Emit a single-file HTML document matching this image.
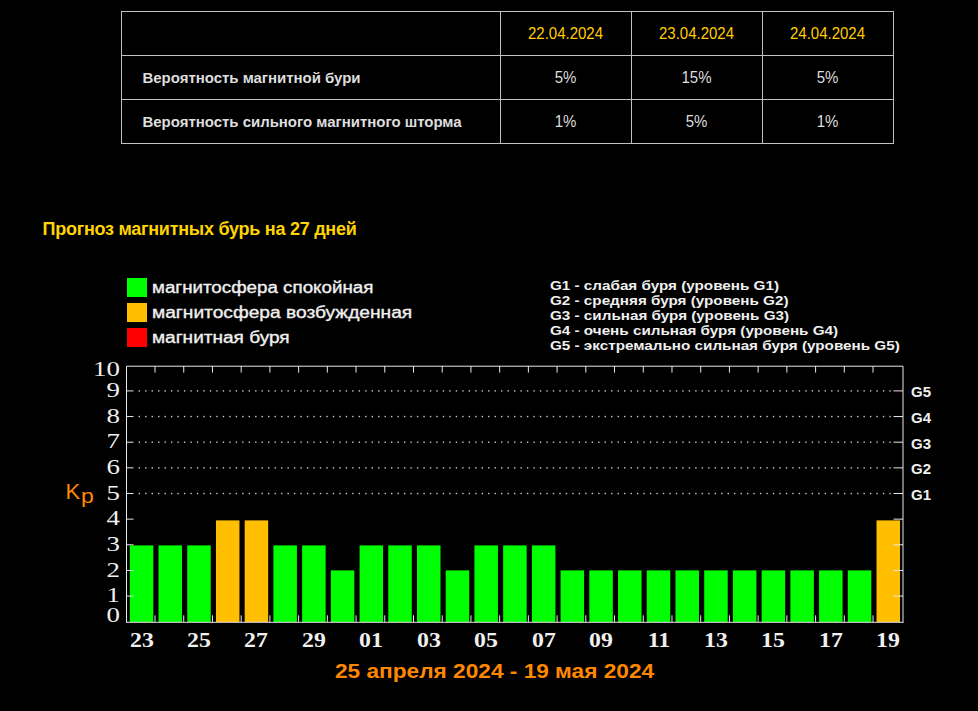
<!DOCTYPE html>
<html><head><meta charset="utf-8">
<style>
html,body{margin:0;padding:0;background:#000;width:978px;height:711px;overflow:hidden;position:relative}
body{font-family:"Liberation Sans",sans-serif}
.a{position:absolute;white-space:nowrap}
.hl{position:absolute;background:#c0c0c0;height:1px}
.vl{position:absolute;background:#c0c0c0;width:1px}
.t{position:absolute;white-space:nowrap;font:bold 15px/17px "Liberation Sans",sans-serif;color:#dedede;letter-spacing:-0.03px}
.c{position:absolute;white-space:nowrap;font:15px/17px "Liberation Sans",sans-serif;color:#dedede;width:131px;text-align:center;transform-origin:0 13.7px;transform:scaleY(1.045)}
.d{color:#ffcc00}
.ttl{position:absolute;left:42.5px;top:219.5px;font:bold 18px/19px "Liberation Sans",sans-serif;color:#ffd400;letter-spacing:-0.26px;white-space:nowrap}
.sq{position:absolute;left:127px;width:20px;height:18.5px}
.lg{position:absolute;left:152px;margin-top:1.2px;font:16px/17px "Liberation Sans",sans-serif;color:#f0f0f0;white-space:nowrap;transform-origin:0 0;transform:scaleX(1.18);-webkit-text-stroke:0.35px #f0f0f0}
.gg{position:absolute;left:550px;font:bold 13px/15px "Liberation Sans",sans-serif;color:#f0f0f0;white-space:nowrap;transform-origin:0 0;transform:scaleX(1.172)}
.yl{position:absolute;left:70.3px;width:50px;text-align:right;font:21px/21px "Liberation Serif",serif;color:#f0f0f0;transform-origin:100% 0;transform:scaleX(1.28)}
.gl{position:absolute;left:911px;font:bold 15px/16px "Liberation Sans",sans-serif;color:#f0f0f0;transform-origin:0 0;transform:scaleX(1.0)}
.xl{position:absolute;top:630px;width:40px;text-align:center;font:bold 20px/20px "Liberation Serif",serif;color:#f0f0f0;transform:scaleX(1.19)}
.kp{position:absolute;left:65.5px;top:481px;font:22px/22px "Liberation Sans",sans-serif;color:#ff8800}
.rng{position:absolute;left:335px;top:660px;font:bold 20.5px/22px "Liberation Sans",sans-serif;color:#ff8800;white-space:nowrap;transform-origin:0 0;transform:scaleX(1.105)}
</style></head><body>
<!-- table -->
<div class="hl" style="left:121px;top:11px;width:773px"></div>
<div class="hl" style="left:121px;top:55px;width:773px"></div>
<div class="hl" style="left:121px;top:99px;width:773px"></div>
<div class="hl" style="left:121px;top:143px;width:773px"></div>
<div class="vl" style="left:121px;top:11px;height:133px"></div>
<div class="vl" style="left:500px;top:11px;height:133px"></div>
<div class="vl" style="left:631px;top:11px;height:133px"></div>
<div class="vl" style="left:762px;top:11px;height:133px"></div>
<div class="vl" style="left:893px;top:11px;height:133px"></div>
<div class="c d" style="left:500px;top:25px">22.04.2024</div>
<div class="c d" style="left:631px;top:25px">23.04.2024</div>
<div class="c d" style="left:762px;top:25px">24.04.2024</div>
<div class="t" style="left:142.5px;top:69px">Вероятность магнитной бури</div>
<div class="c" style="left:500px;top:69px">5%</div>
<div class="c" style="left:631px;top:69px">15%</div>
<div class="c" style="left:762px;top:69px">5%</div>
<div class="t" style="left:142.5px;top:113px">Вероятность сильного магнитного шторма</div>
<div class="c" style="left:500px;top:113px">1%</div>
<div class="c" style="left:631px;top:113px">5%</div>
<div class="c" style="left:762px;top:113px">1%</div>

<div class="ttl">Прогноз магнитных бурь на 27 дней</div>

<div class="sq" style="top:278px;background:#00ff00"></div>
<div class="sq" style="top:303px;background:#ffbf00"></div>
<div class="sq" style="top:328px;background:#ff0000"></div>
<div class="lg" style="top:278px;transform:scaleX(1.172)">магнитосфера спокойная</div>
<div class="lg" style="top:303px;transform:scaleX(1.198)">магнитосфера возбужденная</div>
<div class="lg" style="top:328px;transform:scaleX(1.19)">магнитная буря</div>

<div class="gg" style="top:278px">G1 - слабая буря (уровень G1)</div>
<div class="gg" style="top:293px">G2 - средняя буря (уровень G2)</div>
<div class="gg" style="top:308px">G3 - сильная буря (уровень G3)</div>
<div class="gg" style="top:323px">G4 - очень сильная буря (уровень G4)</div>
<div class="gg" style="top:338px">G5 - экстремально сильная буря (уровень G5)</div>

<svg style="position:absolute;left:0;top:0" width="978" height="711" viewBox="0 0 978 711">
<rect x="129.80" y="545.40" width="23.5" height="76.60" fill="#00ff00"/>
<rect x="158.52" y="545.40" width="23.5" height="76.60" fill="#00ff00"/>
<rect x="187.24" y="545.40" width="23.5" height="76.60" fill="#00ff00"/>
<rect x="215.96" y="520.40" width="23.5" height="101.60" fill="#ffbf00"/>
<rect x="244.68" y="520.40" width="23.5" height="101.60" fill="#ffbf00"/>
<rect x="273.40" y="545.40" width="23.5" height="76.60" fill="#00ff00"/>
<rect x="302.12" y="545.40" width="23.5" height="76.60" fill="#00ff00"/>
<rect x="330.84" y="570.40" width="23.5" height="51.60" fill="#00ff00"/>
<rect x="359.56" y="545.40" width="23.5" height="76.60" fill="#00ff00"/>
<rect x="388.28" y="545.40" width="23.5" height="76.60" fill="#00ff00"/>
<rect x="417.00" y="545.40" width="23.5" height="76.60" fill="#00ff00"/>
<rect x="445.72" y="570.40" width="23.5" height="51.60" fill="#00ff00"/>
<rect x="474.44" y="545.40" width="23.5" height="76.60" fill="#00ff00"/>
<rect x="503.16" y="545.40" width="23.5" height="76.60" fill="#00ff00"/>
<rect x="531.88" y="545.40" width="23.5" height="76.60" fill="#00ff00"/>
<rect x="560.60" y="570.40" width="23.5" height="51.60" fill="#00ff00"/>
<rect x="589.32" y="570.40" width="23.5" height="51.60" fill="#00ff00"/>
<rect x="618.04" y="570.40" width="23.5" height="51.60" fill="#00ff00"/>
<rect x="646.76" y="570.40" width="23.5" height="51.60" fill="#00ff00"/>
<rect x="675.48" y="570.40" width="23.5" height="51.60" fill="#00ff00"/>
<rect x="704.20" y="570.40" width="23.5" height="51.60" fill="#00ff00"/>
<rect x="732.92" y="570.40" width="23.5" height="51.60" fill="#00ff00"/>
<rect x="761.64" y="570.40" width="23.5" height="51.60" fill="#00ff00"/>
<rect x="790.36" y="570.40" width="23.5" height="51.60" fill="#00ff00"/>
<rect x="819.08" y="570.40" width="23.5" height="51.60" fill="#00ff00"/>
<rect x="847.80" y="570.40" width="23.5" height="51.60" fill="#00ff00"/>
<rect x="876.52" y="520.40" width="23.5" height="101.60" fill="#ffbf00"/>
<path d="M126.5 622.5V366.2H903V622.5" fill="none" stroke="#e8e8e8" stroke-width="1"/>
<path d="M126 622.3H903.5" stroke="#e8e8e8" stroke-width="1"/>
<path d="M155.02 366V372.6M155.02 615.3V622M183.74 366V372.6M183.74 615.3V622M212.46 366V372.6M212.46 615.3V622M241.18 366V372.6M241.18 615.3V622M269.90 366V372.6M269.90 615.3V622M298.62 366V372.6M298.62 615.3V622M327.34 366V372.6M327.34 615.3V622M356.06 366V372.6M356.06 615.3V622M384.78 366V372.6M384.78 615.3V622M413.50 366V372.6M413.50 615.3V622M442.22 366V372.6M442.22 615.3V622M470.94 366V372.6M470.94 615.3V622M499.66 366V372.6M499.66 615.3V622M528.38 366V372.6M528.38 615.3V622M557.10 366V372.6M557.10 615.3V622M585.82 366V372.6M585.82 615.3V622M614.54 366V372.6M614.54 615.3V622M643.26 366V372.6M643.26 615.3V622M671.98 366V372.6M671.98 615.3V622M700.70 366V372.6M700.70 615.3V622M729.42 366V372.6M729.42 615.3V622M758.14 366V372.6M758.14 615.3V622M786.86 366V372.6M786.86 615.3V622M815.58 366V372.6M815.58 615.3V622M844.30 366V372.6M844.30 615.3V622M873.02 366V372.6M873.02 615.3V622" stroke="#e8e8e8" stroke-width="1"/>
<path d="M126 596.10H133.5M893.5 596.10H903M126 570.45H133.5M893.5 570.45H903M126 544.80H133.5M893.5 544.80H903M126 519.15H133.5M893.5 519.15H903M126 493.50H133.5M893.5 493.50H903M126 467.85H133.5M893.5 467.85H903M126 442.20H133.5M893.5 442.20H903M126 416.55H133.5M893.5 416.55H903M126 390.90H133.5M893.5 390.90H903" stroke="#e8e8e8" stroke-width="1"/>
<g fill="#c8c8c8"><rect x="138.60" y="492.80" width="1.4" height="1.4"/><rect x="145.07" y="492.80" width="1.4" height="1.4"/><rect x="151.54" y="492.80" width="1.4" height="1.4"/><rect x="158.02" y="492.80" width="1.4" height="1.4"/><rect x="164.49" y="492.80" width="1.4" height="1.4"/><rect x="170.96" y="492.80" width="1.4" height="1.4"/><rect x="177.43" y="492.80" width="1.4" height="1.4"/><rect x="183.90" y="492.80" width="1.4" height="1.4"/><rect x="190.38" y="492.80" width="1.4" height="1.4"/><rect x="196.85" y="492.80" width="1.4" height="1.4"/><rect x="203.32" y="492.80" width="1.4" height="1.4"/><rect x="209.79" y="492.80" width="1.4" height="1.4"/><rect x="216.26" y="492.80" width="1.4" height="1.4"/><rect x="222.74" y="492.80" width="1.4" height="1.4"/><rect x="229.21" y="492.80" width="1.4" height="1.4"/><rect x="235.68" y="492.80" width="1.4" height="1.4"/><rect x="242.15" y="492.80" width="1.4" height="1.4"/><rect x="248.62" y="492.80" width="1.4" height="1.4"/><rect x="255.10" y="492.80" width="1.4" height="1.4"/><rect x="261.57" y="492.80" width="1.4" height="1.4"/><rect x="268.04" y="492.80" width="1.4" height="1.4"/><rect x="274.51" y="492.80" width="1.4" height="1.4"/><rect x="280.98" y="492.80" width="1.4" height="1.4"/><rect x="287.46" y="492.80" width="1.4" height="1.4"/><rect x="293.93" y="492.80" width="1.4" height="1.4"/><rect x="300.40" y="492.80" width="1.4" height="1.4"/><rect x="306.87" y="492.80" width="1.4" height="1.4"/><rect x="313.34" y="492.80" width="1.4" height="1.4"/><rect x="319.82" y="492.80" width="1.4" height="1.4"/><rect x="326.29" y="492.80" width="1.4" height="1.4"/><rect x="332.76" y="492.80" width="1.4" height="1.4"/><rect x="339.23" y="492.80" width="1.4" height="1.4"/><rect x="345.70" y="492.80" width="1.4" height="1.4"/><rect x="352.18" y="492.80" width="1.4" height="1.4"/><rect x="358.65" y="492.80" width="1.4" height="1.4"/><rect x="365.12" y="492.80" width="1.4" height="1.4"/><rect x="371.59" y="492.80" width="1.4" height="1.4"/><rect x="378.06" y="492.80" width="1.4" height="1.4"/><rect x="384.54" y="492.80" width="1.4" height="1.4"/><rect x="391.01" y="492.80" width="1.4" height="1.4"/><rect x="397.48" y="492.80" width="1.4" height="1.4"/><rect x="403.95" y="492.80" width="1.4" height="1.4"/><rect x="410.42" y="492.80" width="1.4" height="1.4"/><rect x="416.90" y="492.80" width="1.4" height="1.4"/><rect x="423.37" y="492.80" width="1.4" height="1.4"/><rect x="429.84" y="492.80" width="1.4" height="1.4"/><rect x="436.31" y="492.80" width="1.4" height="1.4"/><rect x="442.78" y="492.80" width="1.4" height="1.4"/><rect x="449.26" y="492.80" width="1.4" height="1.4"/><rect x="455.73" y="492.80" width="1.4" height="1.4"/><rect x="462.20" y="492.80" width="1.4" height="1.4"/><rect x="468.67" y="492.80" width="1.4" height="1.4"/><rect x="475.14" y="492.80" width="1.4" height="1.4"/><rect x="481.62" y="492.80" width="1.4" height="1.4"/><rect x="488.09" y="492.80" width="1.4" height="1.4"/><rect x="494.56" y="492.80" width="1.4" height="1.4"/><rect x="501.03" y="492.80" width="1.4" height="1.4"/><rect x="507.50" y="492.80" width="1.4" height="1.4"/><rect x="513.98" y="492.80" width="1.4" height="1.4"/><rect x="520.45" y="492.80" width="1.4" height="1.4"/><rect x="526.92" y="492.80" width="1.4" height="1.4"/><rect x="533.39" y="492.80" width="1.4" height="1.4"/><rect x="539.86" y="492.80" width="1.4" height="1.4"/><rect x="546.34" y="492.80" width="1.4" height="1.4"/><rect x="552.81" y="492.80" width="1.4" height="1.4"/><rect x="559.28" y="492.80" width="1.4" height="1.4"/><rect x="565.75" y="492.80" width="1.4" height="1.4"/><rect x="572.22" y="492.80" width="1.4" height="1.4"/><rect x="578.70" y="492.80" width="1.4" height="1.4"/><rect x="585.17" y="492.80" width="1.4" height="1.4"/><rect x="591.64" y="492.80" width="1.4" height="1.4"/><rect x="598.11" y="492.80" width="1.4" height="1.4"/><rect x="604.58" y="492.80" width="1.4" height="1.4"/><rect x="611.06" y="492.80" width="1.4" height="1.4"/><rect x="617.53" y="492.80" width="1.4" height="1.4"/><rect x="624.00" y="492.80" width="1.4" height="1.4"/><rect x="630.47" y="492.80" width="1.4" height="1.4"/><rect x="636.94" y="492.80" width="1.4" height="1.4"/><rect x="643.42" y="492.80" width="1.4" height="1.4"/><rect x="649.89" y="492.80" width="1.4" height="1.4"/><rect x="656.36" y="492.80" width="1.4" height="1.4"/><rect x="662.83" y="492.80" width="1.4" height="1.4"/><rect x="669.30" y="492.80" width="1.4" height="1.4"/><rect x="675.78" y="492.80" width="1.4" height="1.4"/><rect x="682.25" y="492.80" width="1.4" height="1.4"/><rect x="688.72" y="492.80" width="1.4" height="1.4"/><rect x="695.19" y="492.80" width="1.4" height="1.4"/><rect x="701.66" y="492.80" width="1.4" height="1.4"/><rect x="708.14" y="492.80" width="1.4" height="1.4"/><rect x="714.61" y="492.80" width="1.4" height="1.4"/><rect x="721.08" y="492.80" width="1.4" height="1.4"/><rect x="727.55" y="492.80" width="1.4" height="1.4"/><rect x="734.02" y="492.80" width="1.4" height="1.4"/><rect x="740.50" y="492.80" width="1.4" height="1.4"/><rect x="746.97" y="492.80" width="1.4" height="1.4"/><rect x="753.44" y="492.80" width="1.4" height="1.4"/><rect x="759.91" y="492.80" width="1.4" height="1.4"/><rect x="766.38" y="492.80" width="1.4" height="1.4"/><rect x="772.86" y="492.80" width="1.4" height="1.4"/><rect x="779.33" y="492.80" width="1.4" height="1.4"/><rect x="785.80" y="492.80" width="1.4" height="1.4"/><rect x="792.27" y="492.80" width="1.4" height="1.4"/><rect x="798.74" y="492.80" width="1.4" height="1.4"/><rect x="805.22" y="492.80" width="1.4" height="1.4"/><rect x="811.69" y="492.80" width="1.4" height="1.4"/><rect x="818.16" y="492.80" width="1.4" height="1.4"/><rect x="824.63" y="492.80" width="1.4" height="1.4"/><rect x="831.10" y="492.80" width="1.4" height="1.4"/><rect x="837.58" y="492.80" width="1.4" height="1.4"/><rect x="844.05" y="492.80" width="1.4" height="1.4"/><rect x="850.52" y="492.80" width="1.4" height="1.4"/><rect x="856.99" y="492.80" width="1.4" height="1.4"/><rect x="863.46" y="492.80" width="1.4" height="1.4"/><rect x="869.94" y="492.80" width="1.4" height="1.4"/><rect x="876.41" y="492.80" width="1.4" height="1.4"/><rect x="882.88" y="492.80" width="1.4" height="1.4"/><rect x="889.35" y="492.80" width="1.4" height="1.4"/><rect x="138.60" y="467.15" width="1.4" height="1.4"/><rect x="145.07" y="467.15" width="1.4" height="1.4"/><rect x="151.54" y="467.15" width="1.4" height="1.4"/><rect x="158.02" y="467.15" width="1.4" height="1.4"/><rect x="164.49" y="467.15" width="1.4" height="1.4"/><rect x="170.96" y="467.15" width="1.4" height="1.4"/><rect x="177.43" y="467.15" width="1.4" height="1.4"/><rect x="183.90" y="467.15" width="1.4" height="1.4"/><rect x="190.38" y="467.15" width="1.4" height="1.4"/><rect x="196.85" y="467.15" width="1.4" height="1.4"/><rect x="203.32" y="467.15" width="1.4" height="1.4"/><rect x="209.79" y="467.15" width="1.4" height="1.4"/><rect x="216.26" y="467.15" width="1.4" height="1.4"/><rect x="222.74" y="467.15" width="1.4" height="1.4"/><rect x="229.21" y="467.15" width="1.4" height="1.4"/><rect x="235.68" y="467.15" width="1.4" height="1.4"/><rect x="242.15" y="467.15" width="1.4" height="1.4"/><rect x="248.62" y="467.15" width="1.4" height="1.4"/><rect x="255.10" y="467.15" width="1.4" height="1.4"/><rect x="261.57" y="467.15" width="1.4" height="1.4"/><rect x="268.04" y="467.15" width="1.4" height="1.4"/><rect x="274.51" y="467.15" width="1.4" height="1.4"/><rect x="280.98" y="467.15" width="1.4" height="1.4"/><rect x="287.46" y="467.15" width="1.4" height="1.4"/><rect x="293.93" y="467.15" width="1.4" height="1.4"/><rect x="300.40" y="467.15" width="1.4" height="1.4"/><rect x="306.87" y="467.15" width="1.4" height="1.4"/><rect x="313.34" y="467.15" width="1.4" height="1.4"/><rect x="319.82" y="467.15" width="1.4" height="1.4"/><rect x="326.29" y="467.15" width="1.4" height="1.4"/><rect x="332.76" y="467.15" width="1.4" height="1.4"/><rect x="339.23" y="467.15" width="1.4" height="1.4"/><rect x="345.70" y="467.15" width="1.4" height="1.4"/><rect x="352.18" y="467.15" width="1.4" height="1.4"/><rect x="358.65" y="467.15" width="1.4" height="1.4"/><rect x="365.12" y="467.15" width="1.4" height="1.4"/><rect x="371.59" y="467.15" width="1.4" height="1.4"/><rect x="378.06" y="467.15" width="1.4" height="1.4"/><rect x="384.54" y="467.15" width="1.4" height="1.4"/><rect x="391.01" y="467.15" width="1.4" height="1.4"/><rect x="397.48" y="467.15" width="1.4" height="1.4"/><rect x="403.95" y="467.15" width="1.4" height="1.4"/><rect x="410.42" y="467.15" width="1.4" height="1.4"/><rect x="416.90" y="467.15" width="1.4" height="1.4"/><rect x="423.37" y="467.15" width="1.4" height="1.4"/><rect x="429.84" y="467.15" width="1.4" height="1.4"/><rect x="436.31" y="467.15" width="1.4" height="1.4"/><rect x="442.78" y="467.15" width="1.4" height="1.4"/><rect x="449.26" y="467.15" width="1.4" height="1.4"/><rect x="455.73" y="467.15" width="1.4" height="1.4"/><rect x="462.20" y="467.15" width="1.4" height="1.4"/><rect x="468.67" y="467.15" width="1.4" height="1.4"/><rect x="475.14" y="467.15" width="1.4" height="1.4"/><rect x="481.62" y="467.15" width="1.4" height="1.4"/><rect x="488.09" y="467.15" width="1.4" height="1.4"/><rect x="494.56" y="467.15" width="1.4" height="1.4"/><rect x="501.03" y="467.15" width="1.4" height="1.4"/><rect x="507.50" y="467.15" width="1.4" height="1.4"/><rect x="513.98" y="467.15" width="1.4" height="1.4"/><rect x="520.45" y="467.15" width="1.4" height="1.4"/><rect x="526.92" y="467.15" width="1.4" height="1.4"/><rect x="533.39" y="467.15" width="1.4" height="1.4"/><rect x="539.86" y="467.15" width="1.4" height="1.4"/><rect x="546.34" y="467.15" width="1.4" height="1.4"/><rect x="552.81" y="467.15" width="1.4" height="1.4"/><rect x="559.28" y="467.15" width="1.4" height="1.4"/><rect x="565.75" y="467.15" width="1.4" height="1.4"/><rect x="572.22" y="467.15" width="1.4" height="1.4"/><rect x="578.70" y="467.15" width="1.4" height="1.4"/><rect x="585.17" y="467.15" width="1.4" height="1.4"/><rect x="591.64" y="467.15" width="1.4" height="1.4"/><rect x="598.11" y="467.15" width="1.4" height="1.4"/><rect x="604.58" y="467.15" width="1.4" height="1.4"/><rect x="611.06" y="467.15" width="1.4" height="1.4"/><rect x="617.53" y="467.15" width="1.4" height="1.4"/><rect x="624.00" y="467.15" width="1.4" height="1.4"/><rect x="630.47" y="467.15" width="1.4" height="1.4"/><rect x="636.94" y="467.15" width="1.4" height="1.4"/><rect x="643.42" y="467.15" width="1.4" height="1.4"/><rect x="649.89" y="467.15" width="1.4" height="1.4"/><rect x="656.36" y="467.15" width="1.4" height="1.4"/><rect x="662.83" y="467.15" width="1.4" height="1.4"/><rect x="669.30" y="467.15" width="1.4" height="1.4"/><rect x="675.78" y="467.15" width="1.4" height="1.4"/><rect x="682.25" y="467.15" width="1.4" height="1.4"/><rect x="688.72" y="467.15" width="1.4" height="1.4"/><rect x="695.19" y="467.15" width="1.4" height="1.4"/><rect x="701.66" y="467.15" width="1.4" height="1.4"/><rect x="708.14" y="467.15" width="1.4" height="1.4"/><rect x="714.61" y="467.15" width="1.4" height="1.4"/><rect x="721.08" y="467.15" width="1.4" height="1.4"/><rect x="727.55" y="467.15" width="1.4" height="1.4"/><rect x="734.02" y="467.15" width="1.4" height="1.4"/><rect x="740.50" y="467.15" width="1.4" height="1.4"/><rect x="746.97" y="467.15" width="1.4" height="1.4"/><rect x="753.44" y="467.15" width="1.4" height="1.4"/><rect x="759.91" y="467.15" width="1.4" height="1.4"/><rect x="766.38" y="467.15" width="1.4" height="1.4"/><rect x="772.86" y="467.15" width="1.4" height="1.4"/><rect x="779.33" y="467.15" width="1.4" height="1.4"/><rect x="785.80" y="467.15" width="1.4" height="1.4"/><rect x="792.27" y="467.15" width="1.4" height="1.4"/><rect x="798.74" y="467.15" width="1.4" height="1.4"/><rect x="805.22" y="467.15" width="1.4" height="1.4"/><rect x="811.69" y="467.15" width="1.4" height="1.4"/><rect x="818.16" y="467.15" width="1.4" height="1.4"/><rect x="824.63" y="467.15" width="1.4" height="1.4"/><rect x="831.10" y="467.15" width="1.4" height="1.4"/><rect x="837.58" y="467.15" width="1.4" height="1.4"/><rect x="844.05" y="467.15" width="1.4" height="1.4"/><rect x="850.52" y="467.15" width="1.4" height="1.4"/><rect x="856.99" y="467.15" width="1.4" height="1.4"/><rect x="863.46" y="467.15" width="1.4" height="1.4"/><rect x="869.94" y="467.15" width="1.4" height="1.4"/><rect x="876.41" y="467.15" width="1.4" height="1.4"/><rect x="882.88" y="467.15" width="1.4" height="1.4"/><rect x="889.35" y="467.15" width="1.4" height="1.4"/><rect x="138.60" y="441.50" width="1.4" height="1.4"/><rect x="145.07" y="441.50" width="1.4" height="1.4"/><rect x="151.54" y="441.50" width="1.4" height="1.4"/><rect x="158.02" y="441.50" width="1.4" height="1.4"/><rect x="164.49" y="441.50" width="1.4" height="1.4"/><rect x="170.96" y="441.50" width="1.4" height="1.4"/><rect x="177.43" y="441.50" width="1.4" height="1.4"/><rect x="183.90" y="441.50" width="1.4" height="1.4"/><rect x="190.38" y="441.50" width="1.4" height="1.4"/><rect x="196.85" y="441.50" width="1.4" height="1.4"/><rect x="203.32" y="441.50" width="1.4" height="1.4"/><rect x="209.79" y="441.50" width="1.4" height="1.4"/><rect x="216.26" y="441.50" width="1.4" height="1.4"/><rect x="222.74" y="441.50" width="1.4" height="1.4"/><rect x="229.21" y="441.50" width="1.4" height="1.4"/><rect x="235.68" y="441.50" width="1.4" height="1.4"/><rect x="242.15" y="441.50" width="1.4" height="1.4"/><rect x="248.62" y="441.50" width="1.4" height="1.4"/><rect x="255.10" y="441.50" width="1.4" height="1.4"/><rect x="261.57" y="441.50" width="1.4" height="1.4"/><rect x="268.04" y="441.50" width="1.4" height="1.4"/><rect x="274.51" y="441.50" width="1.4" height="1.4"/><rect x="280.98" y="441.50" width="1.4" height="1.4"/><rect x="287.46" y="441.50" width="1.4" height="1.4"/><rect x="293.93" y="441.50" width="1.4" height="1.4"/><rect x="300.40" y="441.50" width="1.4" height="1.4"/><rect x="306.87" y="441.50" width="1.4" height="1.4"/><rect x="313.34" y="441.50" width="1.4" height="1.4"/><rect x="319.82" y="441.50" width="1.4" height="1.4"/><rect x="326.29" y="441.50" width="1.4" height="1.4"/><rect x="332.76" y="441.50" width="1.4" height="1.4"/><rect x="339.23" y="441.50" width="1.4" height="1.4"/><rect x="345.70" y="441.50" width="1.4" height="1.4"/><rect x="352.18" y="441.50" width="1.4" height="1.4"/><rect x="358.65" y="441.50" width="1.4" height="1.4"/><rect x="365.12" y="441.50" width="1.4" height="1.4"/><rect x="371.59" y="441.50" width="1.4" height="1.4"/><rect x="378.06" y="441.50" width="1.4" height="1.4"/><rect x="384.54" y="441.50" width="1.4" height="1.4"/><rect x="391.01" y="441.50" width="1.4" height="1.4"/><rect x="397.48" y="441.50" width="1.4" height="1.4"/><rect x="403.95" y="441.50" width="1.4" height="1.4"/><rect x="410.42" y="441.50" width="1.4" height="1.4"/><rect x="416.90" y="441.50" width="1.4" height="1.4"/><rect x="423.37" y="441.50" width="1.4" height="1.4"/><rect x="429.84" y="441.50" width="1.4" height="1.4"/><rect x="436.31" y="441.50" width="1.4" height="1.4"/><rect x="442.78" y="441.50" width="1.4" height="1.4"/><rect x="449.26" y="441.50" width="1.4" height="1.4"/><rect x="455.73" y="441.50" width="1.4" height="1.4"/><rect x="462.20" y="441.50" width="1.4" height="1.4"/><rect x="468.67" y="441.50" width="1.4" height="1.4"/><rect x="475.14" y="441.50" width="1.4" height="1.4"/><rect x="481.62" y="441.50" width="1.4" height="1.4"/><rect x="488.09" y="441.50" width="1.4" height="1.4"/><rect x="494.56" y="441.50" width="1.4" height="1.4"/><rect x="501.03" y="441.50" width="1.4" height="1.4"/><rect x="507.50" y="441.50" width="1.4" height="1.4"/><rect x="513.98" y="441.50" width="1.4" height="1.4"/><rect x="520.45" y="441.50" width="1.4" height="1.4"/><rect x="526.92" y="441.50" width="1.4" height="1.4"/><rect x="533.39" y="441.50" width="1.4" height="1.4"/><rect x="539.86" y="441.50" width="1.4" height="1.4"/><rect x="546.34" y="441.50" width="1.4" height="1.4"/><rect x="552.81" y="441.50" width="1.4" height="1.4"/><rect x="559.28" y="441.50" width="1.4" height="1.4"/><rect x="565.75" y="441.50" width="1.4" height="1.4"/><rect x="572.22" y="441.50" width="1.4" height="1.4"/><rect x="578.70" y="441.50" width="1.4" height="1.4"/><rect x="585.17" y="441.50" width="1.4" height="1.4"/><rect x="591.64" y="441.50" width="1.4" height="1.4"/><rect x="598.11" y="441.50" width="1.4" height="1.4"/><rect x="604.58" y="441.50" width="1.4" height="1.4"/><rect x="611.06" y="441.50" width="1.4" height="1.4"/><rect x="617.53" y="441.50" width="1.4" height="1.4"/><rect x="624.00" y="441.50" width="1.4" height="1.4"/><rect x="630.47" y="441.50" width="1.4" height="1.4"/><rect x="636.94" y="441.50" width="1.4" height="1.4"/><rect x="643.42" y="441.50" width="1.4" height="1.4"/><rect x="649.89" y="441.50" width="1.4" height="1.4"/><rect x="656.36" y="441.50" width="1.4" height="1.4"/><rect x="662.83" y="441.50" width="1.4" height="1.4"/><rect x="669.30" y="441.50" width="1.4" height="1.4"/><rect x="675.78" y="441.50" width="1.4" height="1.4"/><rect x="682.25" y="441.50" width="1.4" height="1.4"/><rect x="688.72" y="441.50" width="1.4" height="1.4"/><rect x="695.19" y="441.50" width="1.4" height="1.4"/><rect x="701.66" y="441.50" width="1.4" height="1.4"/><rect x="708.14" y="441.50" width="1.4" height="1.4"/><rect x="714.61" y="441.50" width="1.4" height="1.4"/><rect x="721.08" y="441.50" width="1.4" height="1.4"/><rect x="727.55" y="441.50" width="1.4" height="1.4"/><rect x="734.02" y="441.50" width="1.4" height="1.4"/><rect x="740.50" y="441.50" width="1.4" height="1.4"/><rect x="746.97" y="441.50" width="1.4" height="1.4"/><rect x="753.44" y="441.50" width="1.4" height="1.4"/><rect x="759.91" y="441.50" width="1.4" height="1.4"/><rect x="766.38" y="441.50" width="1.4" height="1.4"/><rect x="772.86" y="441.50" width="1.4" height="1.4"/><rect x="779.33" y="441.50" width="1.4" height="1.4"/><rect x="785.80" y="441.50" width="1.4" height="1.4"/><rect x="792.27" y="441.50" width="1.4" height="1.4"/><rect x="798.74" y="441.50" width="1.4" height="1.4"/><rect x="805.22" y="441.50" width="1.4" height="1.4"/><rect x="811.69" y="441.50" width="1.4" height="1.4"/><rect x="818.16" y="441.50" width="1.4" height="1.4"/><rect x="824.63" y="441.50" width="1.4" height="1.4"/><rect x="831.10" y="441.50" width="1.4" height="1.4"/><rect x="837.58" y="441.50" width="1.4" height="1.4"/><rect x="844.05" y="441.50" width="1.4" height="1.4"/><rect x="850.52" y="441.50" width="1.4" height="1.4"/><rect x="856.99" y="441.50" width="1.4" height="1.4"/><rect x="863.46" y="441.50" width="1.4" height="1.4"/><rect x="869.94" y="441.50" width="1.4" height="1.4"/><rect x="876.41" y="441.50" width="1.4" height="1.4"/><rect x="882.88" y="441.50" width="1.4" height="1.4"/><rect x="889.35" y="441.50" width="1.4" height="1.4"/><rect x="138.60" y="415.85" width="1.4" height="1.4"/><rect x="145.07" y="415.85" width="1.4" height="1.4"/><rect x="151.54" y="415.85" width="1.4" height="1.4"/><rect x="158.02" y="415.85" width="1.4" height="1.4"/><rect x="164.49" y="415.85" width="1.4" height="1.4"/><rect x="170.96" y="415.85" width="1.4" height="1.4"/><rect x="177.43" y="415.85" width="1.4" height="1.4"/><rect x="183.90" y="415.85" width="1.4" height="1.4"/><rect x="190.38" y="415.85" width="1.4" height="1.4"/><rect x="196.85" y="415.85" width="1.4" height="1.4"/><rect x="203.32" y="415.85" width="1.4" height="1.4"/><rect x="209.79" y="415.85" width="1.4" height="1.4"/><rect x="216.26" y="415.85" width="1.4" height="1.4"/><rect x="222.74" y="415.85" width="1.4" height="1.4"/><rect x="229.21" y="415.85" width="1.4" height="1.4"/><rect x="235.68" y="415.85" width="1.4" height="1.4"/><rect x="242.15" y="415.85" width="1.4" height="1.4"/><rect x="248.62" y="415.85" width="1.4" height="1.4"/><rect x="255.10" y="415.85" width="1.4" height="1.4"/><rect x="261.57" y="415.85" width="1.4" height="1.4"/><rect x="268.04" y="415.85" width="1.4" height="1.4"/><rect x="274.51" y="415.85" width="1.4" height="1.4"/><rect x="280.98" y="415.85" width="1.4" height="1.4"/><rect x="287.46" y="415.85" width="1.4" height="1.4"/><rect x="293.93" y="415.85" width="1.4" height="1.4"/><rect x="300.40" y="415.85" width="1.4" height="1.4"/><rect x="306.87" y="415.85" width="1.4" height="1.4"/><rect x="313.34" y="415.85" width="1.4" height="1.4"/><rect x="319.82" y="415.85" width="1.4" height="1.4"/><rect x="326.29" y="415.85" width="1.4" height="1.4"/><rect x="332.76" y="415.85" width="1.4" height="1.4"/><rect x="339.23" y="415.85" width="1.4" height="1.4"/><rect x="345.70" y="415.85" width="1.4" height="1.4"/><rect x="352.18" y="415.85" width="1.4" height="1.4"/><rect x="358.65" y="415.85" width="1.4" height="1.4"/><rect x="365.12" y="415.85" width="1.4" height="1.4"/><rect x="371.59" y="415.85" width="1.4" height="1.4"/><rect x="378.06" y="415.85" width="1.4" height="1.4"/><rect x="384.54" y="415.85" width="1.4" height="1.4"/><rect x="391.01" y="415.85" width="1.4" height="1.4"/><rect x="397.48" y="415.85" width="1.4" height="1.4"/><rect x="403.95" y="415.85" width="1.4" height="1.4"/><rect x="410.42" y="415.85" width="1.4" height="1.4"/><rect x="416.90" y="415.85" width="1.4" height="1.4"/><rect x="423.37" y="415.85" width="1.4" height="1.4"/><rect x="429.84" y="415.85" width="1.4" height="1.4"/><rect x="436.31" y="415.85" width="1.4" height="1.4"/><rect x="442.78" y="415.85" width="1.4" height="1.4"/><rect x="449.26" y="415.85" width="1.4" height="1.4"/><rect x="455.73" y="415.85" width="1.4" height="1.4"/><rect x="462.20" y="415.85" width="1.4" height="1.4"/><rect x="468.67" y="415.85" width="1.4" height="1.4"/><rect x="475.14" y="415.85" width="1.4" height="1.4"/><rect x="481.62" y="415.85" width="1.4" height="1.4"/><rect x="488.09" y="415.85" width="1.4" height="1.4"/><rect x="494.56" y="415.85" width="1.4" height="1.4"/><rect x="501.03" y="415.85" width="1.4" height="1.4"/><rect x="507.50" y="415.85" width="1.4" height="1.4"/><rect x="513.98" y="415.85" width="1.4" height="1.4"/><rect x="520.45" y="415.85" width="1.4" height="1.4"/><rect x="526.92" y="415.85" width="1.4" height="1.4"/><rect x="533.39" y="415.85" width="1.4" height="1.4"/><rect x="539.86" y="415.85" width="1.4" height="1.4"/><rect x="546.34" y="415.85" width="1.4" height="1.4"/><rect x="552.81" y="415.85" width="1.4" height="1.4"/><rect x="559.28" y="415.85" width="1.4" height="1.4"/><rect x="565.75" y="415.85" width="1.4" height="1.4"/><rect x="572.22" y="415.85" width="1.4" height="1.4"/><rect x="578.70" y="415.85" width="1.4" height="1.4"/><rect x="585.17" y="415.85" width="1.4" height="1.4"/><rect x="591.64" y="415.85" width="1.4" height="1.4"/><rect x="598.11" y="415.85" width="1.4" height="1.4"/><rect x="604.58" y="415.85" width="1.4" height="1.4"/><rect x="611.06" y="415.85" width="1.4" height="1.4"/><rect x="617.53" y="415.85" width="1.4" height="1.4"/><rect x="624.00" y="415.85" width="1.4" height="1.4"/><rect x="630.47" y="415.85" width="1.4" height="1.4"/><rect x="636.94" y="415.85" width="1.4" height="1.4"/><rect x="643.42" y="415.85" width="1.4" height="1.4"/><rect x="649.89" y="415.85" width="1.4" height="1.4"/><rect x="656.36" y="415.85" width="1.4" height="1.4"/><rect x="662.83" y="415.85" width="1.4" height="1.4"/><rect x="669.30" y="415.85" width="1.4" height="1.4"/><rect x="675.78" y="415.85" width="1.4" height="1.4"/><rect x="682.25" y="415.85" width="1.4" height="1.4"/><rect x="688.72" y="415.85" width="1.4" height="1.4"/><rect x="695.19" y="415.85" width="1.4" height="1.4"/><rect x="701.66" y="415.85" width="1.4" height="1.4"/><rect x="708.14" y="415.85" width="1.4" height="1.4"/><rect x="714.61" y="415.85" width="1.4" height="1.4"/><rect x="721.08" y="415.85" width="1.4" height="1.4"/><rect x="727.55" y="415.85" width="1.4" height="1.4"/><rect x="734.02" y="415.85" width="1.4" height="1.4"/><rect x="740.50" y="415.85" width="1.4" height="1.4"/><rect x="746.97" y="415.85" width="1.4" height="1.4"/><rect x="753.44" y="415.85" width="1.4" height="1.4"/><rect x="759.91" y="415.85" width="1.4" height="1.4"/><rect x="766.38" y="415.85" width="1.4" height="1.4"/><rect x="772.86" y="415.85" width="1.4" height="1.4"/><rect x="779.33" y="415.85" width="1.4" height="1.4"/><rect x="785.80" y="415.85" width="1.4" height="1.4"/><rect x="792.27" y="415.85" width="1.4" height="1.4"/><rect x="798.74" y="415.85" width="1.4" height="1.4"/><rect x="805.22" y="415.85" width="1.4" height="1.4"/><rect x="811.69" y="415.85" width="1.4" height="1.4"/><rect x="818.16" y="415.85" width="1.4" height="1.4"/><rect x="824.63" y="415.85" width="1.4" height="1.4"/><rect x="831.10" y="415.85" width="1.4" height="1.4"/><rect x="837.58" y="415.85" width="1.4" height="1.4"/><rect x="844.05" y="415.85" width="1.4" height="1.4"/><rect x="850.52" y="415.85" width="1.4" height="1.4"/><rect x="856.99" y="415.85" width="1.4" height="1.4"/><rect x="863.46" y="415.85" width="1.4" height="1.4"/><rect x="869.94" y="415.85" width="1.4" height="1.4"/><rect x="876.41" y="415.85" width="1.4" height="1.4"/><rect x="882.88" y="415.85" width="1.4" height="1.4"/><rect x="889.35" y="415.85" width="1.4" height="1.4"/><rect x="138.60" y="390.20" width="1.4" height="1.4"/><rect x="145.07" y="390.20" width="1.4" height="1.4"/><rect x="151.54" y="390.20" width="1.4" height="1.4"/><rect x="158.02" y="390.20" width="1.4" height="1.4"/><rect x="164.49" y="390.20" width="1.4" height="1.4"/><rect x="170.96" y="390.20" width="1.4" height="1.4"/><rect x="177.43" y="390.20" width="1.4" height="1.4"/><rect x="183.90" y="390.20" width="1.4" height="1.4"/><rect x="190.38" y="390.20" width="1.4" height="1.4"/><rect x="196.85" y="390.20" width="1.4" height="1.4"/><rect x="203.32" y="390.20" width="1.4" height="1.4"/><rect x="209.79" y="390.20" width="1.4" height="1.4"/><rect x="216.26" y="390.20" width="1.4" height="1.4"/><rect x="222.74" y="390.20" width="1.4" height="1.4"/><rect x="229.21" y="390.20" width="1.4" height="1.4"/><rect x="235.68" y="390.20" width="1.4" height="1.4"/><rect x="242.15" y="390.20" width="1.4" height="1.4"/><rect x="248.62" y="390.20" width="1.4" height="1.4"/><rect x="255.10" y="390.20" width="1.4" height="1.4"/><rect x="261.57" y="390.20" width="1.4" height="1.4"/><rect x="268.04" y="390.20" width="1.4" height="1.4"/><rect x="274.51" y="390.20" width="1.4" height="1.4"/><rect x="280.98" y="390.20" width="1.4" height="1.4"/><rect x="287.46" y="390.20" width="1.4" height="1.4"/><rect x="293.93" y="390.20" width="1.4" height="1.4"/><rect x="300.40" y="390.20" width="1.4" height="1.4"/><rect x="306.87" y="390.20" width="1.4" height="1.4"/><rect x="313.34" y="390.20" width="1.4" height="1.4"/><rect x="319.82" y="390.20" width="1.4" height="1.4"/><rect x="326.29" y="390.20" width="1.4" height="1.4"/><rect x="332.76" y="390.20" width="1.4" height="1.4"/><rect x="339.23" y="390.20" width="1.4" height="1.4"/><rect x="345.70" y="390.20" width="1.4" height="1.4"/><rect x="352.18" y="390.20" width="1.4" height="1.4"/><rect x="358.65" y="390.20" width="1.4" height="1.4"/><rect x="365.12" y="390.20" width="1.4" height="1.4"/><rect x="371.59" y="390.20" width="1.4" height="1.4"/><rect x="378.06" y="390.20" width="1.4" height="1.4"/><rect x="384.54" y="390.20" width="1.4" height="1.4"/><rect x="391.01" y="390.20" width="1.4" height="1.4"/><rect x="397.48" y="390.20" width="1.4" height="1.4"/><rect x="403.95" y="390.20" width="1.4" height="1.4"/><rect x="410.42" y="390.20" width="1.4" height="1.4"/><rect x="416.90" y="390.20" width="1.4" height="1.4"/><rect x="423.37" y="390.20" width="1.4" height="1.4"/><rect x="429.84" y="390.20" width="1.4" height="1.4"/><rect x="436.31" y="390.20" width="1.4" height="1.4"/><rect x="442.78" y="390.20" width="1.4" height="1.4"/><rect x="449.26" y="390.20" width="1.4" height="1.4"/><rect x="455.73" y="390.20" width="1.4" height="1.4"/><rect x="462.20" y="390.20" width="1.4" height="1.4"/><rect x="468.67" y="390.20" width="1.4" height="1.4"/><rect x="475.14" y="390.20" width="1.4" height="1.4"/><rect x="481.62" y="390.20" width="1.4" height="1.4"/><rect x="488.09" y="390.20" width="1.4" height="1.4"/><rect x="494.56" y="390.20" width="1.4" height="1.4"/><rect x="501.03" y="390.20" width="1.4" height="1.4"/><rect x="507.50" y="390.20" width="1.4" height="1.4"/><rect x="513.98" y="390.20" width="1.4" height="1.4"/><rect x="520.45" y="390.20" width="1.4" height="1.4"/><rect x="526.92" y="390.20" width="1.4" height="1.4"/><rect x="533.39" y="390.20" width="1.4" height="1.4"/><rect x="539.86" y="390.20" width="1.4" height="1.4"/><rect x="546.34" y="390.20" width="1.4" height="1.4"/><rect x="552.81" y="390.20" width="1.4" height="1.4"/><rect x="559.28" y="390.20" width="1.4" height="1.4"/><rect x="565.75" y="390.20" width="1.4" height="1.4"/><rect x="572.22" y="390.20" width="1.4" height="1.4"/><rect x="578.70" y="390.20" width="1.4" height="1.4"/><rect x="585.17" y="390.20" width="1.4" height="1.4"/><rect x="591.64" y="390.20" width="1.4" height="1.4"/><rect x="598.11" y="390.20" width="1.4" height="1.4"/><rect x="604.58" y="390.20" width="1.4" height="1.4"/><rect x="611.06" y="390.20" width="1.4" height="1.4"/><rect x="617.53" y="390.20" width="1.4" height="1.4"/><rect x="624.00" y="390.20" width="1.4" height="1.4"/><rect x="630.47" y="390.20" width="1.4" height="1.4"/><rect x="636.94" y="390.20" width="1.4" height="1.4"/><rect x="643.42" y="390.20" width="1.4" height="1.4"/><rect x="649.89" y="390.20" width="1.4" height="1.4"/><rect x="656.36" y="390.20" width="1.4" height="1.4"/><rect x="662.83" y="390.20" width="1.4" height="1.4"/><rect x="669.30" y="390.20" width="1.4" height="1.4"/><rect x="675.78" y="390.20" width="1.4" height="1.4"/><rect x="682.25" y="390.20" width="1.4" height="1.4"/><rect x="688.72" y="390.20" width="1.4" height="1.4"/><rect x="695.19" y="390.20" width="1.4" height="1.4"/><rect x="701.66" y="390.20" width="1.4" height="1.4"/><rect x="708.14" y="390.20" width="1.4" height="1.4"/><rect x="714.61" y="390.20" width="1.4" height="1.4"/><rect x="721.08" y="390.20" width="1.4" height="1.4"/><rect x="727.55" y="390.20" width="1.4" height="1.4"/><rect x="734.02" y="390.20" width="1.4" height="1.4"/><rect x="740.50" y="390.20" width="1.4" height="1.4"/><rect x="746.97" y="390.20" width="1.4" height="1.4"/><rect x="753.44" y="390.20" width="1.4" height="1.4"/><rect x="759.91" y="390.20" width="1.4" height="1.4"/><rect x="766.38" y="390.20" width="1.4" height="1.4"/><rect x="772.86" y="390.20" width="1.4" height="1.4"/><rect x="779.33" y="390.20" width="1.4" height="1.4"/><rect x="785.80" y="390.20" width="1.4" height="1.4"/><rect x="792.27" y="390.20" width="1.4" height="1.4"/><rect x="798.74" y="390.20" width="1.4" height="1.4"/><rect x="805.22" y="390.20" width="1.4" height="1.4"/><rect x="811.69" y="390.20" width="1.4" height="1.4"/><rect x="818.16" y="390.20" width="1.4" height="1.4"/><rect x="824.63" y="390.20" width="1.4" height="1.4"/><rect x="831.10" y="390.20" width="1.4" height="1.4"/><rect x="837.58" y="390.20" width="1.4" height="1.4"/><rect x="844.05" y="390.20" width="1.4" height="1.4"/><rect x="850.52" y="390.20" width="1.4" height="1.4"/><rect x="856.99" y="390.20" width="1.4" height="1.4"/><rect x="863.46" y="390.20" width="1.4" height="1.4"/><rect x="869.94" y="390.20" width="1.4" height="1.4"/><rect x="876.41" y="390.20" width="1.4" height="1.4"/><rect x="882.88" y="390.20" width="1.4" height="1.4"/><rect x="889.35" y="390.20" width="1.4" height="1.4"/></g>
</svg>
<div class="yl" style="top:604.9px">0</div><div class="yl" style="top:585.3px">1</div><div class="yl" style="top:559.7px">2</div><div class="yl" style="top:534.0px">3</div><div class="yl" style="top:508.3px">4</div><div class="yl" style="top:482.7px">5</div><div class="yl" style="top:457.1px">6</div><div class="yl" style="top:431.4px">7</div><div class="yl" style="top:405.8px">8</div><div class="yl" style="top:380.1px">9</div><div class="yl" style="top:359.0px">10</div>
<div class="gl" style="top:486.8px">G1</div><div class="gl" style="top:461.2px">G2</div><div class="gl" style="top:435.5px">G3</div><div class="gl" style="top:409.9px">G4</div><div class="gl" style="top:384.2px">G5</div>
<div class="xl" style="left:121.6px">23</div><div class="xl" style="left:179.0px">25</div><div class="xl" style="left:236.4px">27</div><div class="xl" style="left:293.9px">29</div><div class="xl" style="left:351.3px">01</div><div class="xl" style="left:408.8px">03</div><div class="xl" style="left:466.2px">05</div><div class="xl" style="left:523.6px">07</div><div class="xl" style="left:581.1px">09</div><div class="xl" style="left:638.5px">11</div><div class="xl" style="left:695.9px">13</div><div class="xl" style="left:753.4px">15</div><div class="xl" style="left:810.8px">17</div><div class="xl" style="left:868.3px">19</div>
<div class="kp">K<span style="display:inline-block;position:relative;top:3.9px;font-size:20px;transform:scaleX(1.15);transform-origin:0 0;margin-left:1px">p</span></div>
<div class="rng">25 апреля 2024 - 19 мая 2024</div>
</body></html>
